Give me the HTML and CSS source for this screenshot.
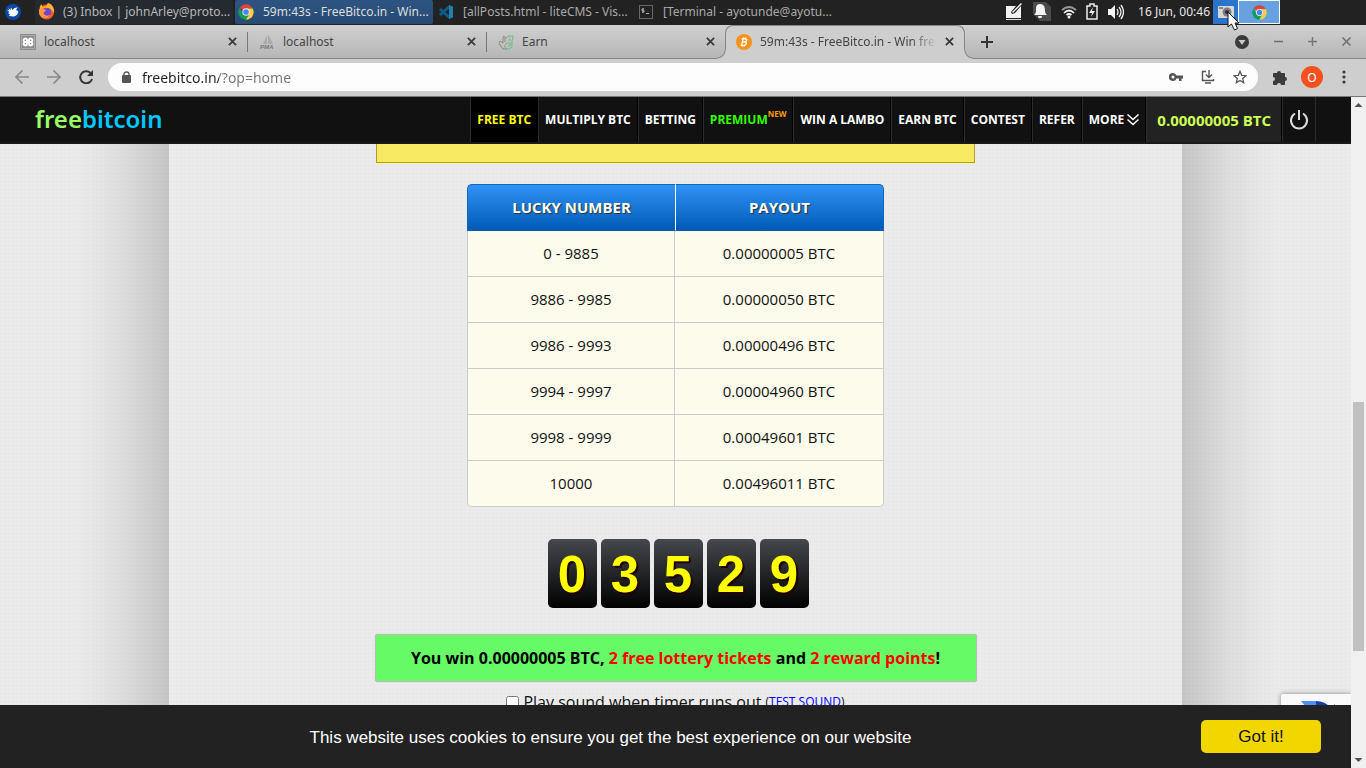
FILE: index.html
```html
<!DOCTYPE html>
<html lang="en">
<head>
<meta charset="utf-8">
<title>59m:43s - FreeBitco.in - Win free bitcoins every hour!</title>
<link rel="stylesheet" href="styles.css">
</head>
<body>
<svg class="defs" aria-hidden="true">
  <symbol id="chrome" viewBox="0 0 48 48">
    <path fill="#db4437" d="M24 24 4.900 11.200A23 23 0 0 1 44 12.500H24z"/>
    <path fill="#ffcd40" d="M24 13.500H44.500A23 23 0 0 1 23 47L34 29z"/>
    <path fill="#0f9d58" d="M4.900 11.200 14.500 28.500 24 35 31 33 23 47A23 23 0 0 1 4.900 11.200z"/>
    <circle cx="24" cy="24" r="11" fill="#f1f1f1"/>
    <circle cx="24" cy="24" r="8.500" fill="#4285f4"/>
  </symbol>
  <symbol id="close" viewBox="0 0 10 10"><path d="M1 1 9 9M9 1 1 9" fill="none" stroke="currentColor" stroke-width="2"/></symbol>
</svg>

<header class="panel">
  <button class="whisker" aria-label="Applications">
    <svg width="16" height="16" viewBox="0 0 16 16"><circle cx="8" cy="8" r="8" fill="#0a49a8"/><path fill="#fff" d="M3 3.500 5.500 6 6 3.500 7.500 6Q9 3 12.500 3.500L11 6q3 1 2 3-1 3-4 3.500L4 12 5 10.500 3 9l1.500-1L2 6l2.500.3z"/></svg>
  </button>
  <nav class="tasks" aria-label="Windows">
    <button class="task task-min">
      <svg width="17" height="17" viewBox="0 0 17 17"><circle cx="8.500" cy="9" r="7.500" fill="#ff5a2c"/><path d="M2 7C1 4 3 2 3 1l2 3 3-1 2-3c4 1 7 5 6 10C13 5 9 4 6 5z" fill="#ffb22c"/><circle cx="9" cy="9" r="4" fill="#6f45d0"/><path d="M1 7c1-2 3-2 4-1l3 1c-1 2-3 2-2 4s4 2 6 1c-2 5-12 4-11-5z" fill="#ff9640"/></svg>
      <span>(3) Inbox | johnArley@proto...</span>
    </button>
    <button class="task task-on">
      <svg width="16" height="16"><use href="#chrome"/></svg>
      <span>59m:43s - FreeBitco.in - Win...</span>
    </button>
    <button class="task">
      <svg width="16" height="16" viewBox="0 0 16 16"><path d="m12 2-10 9M12 14 2 5" stroke="#0d5c88" stroke-width="3"/><path d="m11 1 4 1.500v11L11 15z" fill="#1f7fae"/></svg>
      <span>[allPosts.html - liteCMS - Vis...</span>
    </button>
    <button class="task">
      <svg width="16" height="16" viewBox="0 0 16 16" fill="none"><rect x="1.500" y="1.500" width="13" height="13" fill="#222" stroke="#686868"/><path d="M6 5H4v1.500h2V8H4M5 4v5M8 9.500h3" stroke="#aaa"/></svg>
      <span>[Terminal - ayotunde@ayotu...</span>
    </button>
  </nav>
  <div class="tray">
    <svg width="18" height="18" viewBox="0 0 18 18"><path fill="#f2f2f2" d="M1 3h10L6 9l1 2 3-1 6-7v12H1z"/><path d="m7.500 9.500 9-9" stroke="#f2f2f2" stroke-width="1.500"/><path d="M1 16.500h15" stroke="#ddd"/></svg>
    <svg width="20" height="20" viewBox="0 0 20 20"><path fill="#4b4b4b" d="M1 0h13l5 5v14H8L1 12z"/><path fill="#f5f5f5" d="M8 2c4 0 5 3 5 7 0 2 1 3 2 4H2c1-1 2-2 2-4 0-4 0-7 4-7zM6 14h4c0 3-4 3-4 0z"/></svg>
    <svg width="16" height="16" viewBox="0 0 16 16" fill="none" stroke-width="1.700"><path stroke="#999" d="M1 6q7-6 14 0"/><path stroke="#f5f5f5" d="M3 9q5-5 10 0M5.500 11q2.500-2 5 0"/><circle cx="8" cy="13" r="1.500" fill="#f5f5f5"/></svg>
    <svg width="12" height="17" viewBox="0 0 12 17"><path fill="none" stroke="#eee" stroke-width="1.500" d="M4 3V1h4v2h3v13H1V3z"/><path fill="#eee" d="M7 4 3 10h3l-1 4 4-6H6z"/></svg>
    <svg width="17" height="16" viewBox="0 0 17 16"><path fill="#f5f5f5" d="M1 5h3l4-4v14l-4-4H1z"/><path fill="none" stroke="#eee" stroke-width="1.300" d="M10 5q2 3 0 6M12 3q4 5 0 10M14 1q5 7 0 14"/></svg>
  </div>
  <time class="clock">16 Jun, 00:46</time>
  <div class="launchers">
    <button class="shot" aria-label="Screenshot">
      <svg width="16" height="14" viewBox="0 0 16 14"><rect y="1" width="16" height="12" rx="1" fill="#d6d6d2"/><rect x="1" y="2" width="4" height="2" fill="#888"/><circle cx="9" cy="7" r="4.500" fill="#7e7e80"/><circle cx="9" cy="7" r="2" fill="#382344"/></svg>
      <svg class="pointer" width="13" height="21" viewBox="0 0 13 21"><path d="M1 1v15l3.500-3 3 6 3-1.500L8 12h4z" fill="#fff" stroke="#111"/></svg>
    </button>
    <button class="mini" aria-label="Chrome"><svg width="15" height="15"><use href="#chrome"/></svg></button>
  </div>
</header>

<div class="tabstrip">
  <div class="tab tab-first">
    <svg width="16" height="16" viewBox="0 0 16 16"><rect width="16" height="16" rx="1" fill="#8c8c8c"/><rect x="1.500" y="1.500" width="13" height="13" fill="none" stroke="#aaa"/><path d="M7 8H5.500a1.700 1.700 0 1 1 1.500-2v4a1.700 1.700 0 1 1-1.500-2h5a1.700 1.700 0 1 1-1.500 2V6a1.700 1.700 0 1 1 1.500 2z" fill="none" stroke="#fff" stroke-width="2"/></svg>
    <span>localhost</span><button aria-label="Close tab"><svg width="9" height="9"><use href="#close"/></svg></button>
  </div>
  <div class="tab">
    <svg width="16" height="16" viewBox="0 0 16 16"><path d="m8 1-4 9h4zM9 0l5 10H9z" fill="#aaa"/><text x="1" y="15" class="pma">PMA</text></svg>
    <span>localhost</span><button aria-label="Close tab"><svg width="9" height="9"><use href="#close"/></svg></button>
  </div>
  <div class="tab">
    <svg width="16" height="16" viewBox="0 0 16 16" fill="none"><path stroke="#94877f" d="M7 8V3Q5 1 5 4v5L2 7q-2 1 0 4l3 4h4"/><path stroke="#68bd86" d="M8 5q0-3 3-3h4v3l-1 1v7l-3 2H8q-3-3 1-6h4q0 3-3 3M10 6h3M11 4h1"/></svg>
    <span>Earn</span><button aria-label="Close tab"><svg width="9" height="9"><use href="#close"/></svg></button>
  </div>
  <div class="tab tab-active">
    <svg width="16" height="16" viewBox="0 0 16 16"><circle cx="8" cy="8" r="8" fill="#f7931a"/><path d="M5.500 4.800H9q2.300.3 1.700 1.700T8.500 7.900H6 8.500q2.300.3 1.700 1.900T7.500 11.300H4.500M7 4.500 5.700 11.500M7.700 3.300 7.500 4.500M9.500 3.500 9.300 4.700M6.300 11.500 6 12.700M8.200 11.500 8 12.700" fill="none" stroke="#fff" stroke-width="1.300"/></svg>
    <span>59m:43s - FreeBitco.in - Win fre</span><button aria-label="Close tab"><svg width="9" height="9"><use href="#close"/></svg></button>
  </div>
  <button class="newtab" aria-label="New tab"><svg width="12" height="12" viewBox="0 0 12 12"><path d="M6 0v12M0 6h12" stroke="#333" stroke-width="2"/></svg></button>
  <div class="winbtns">
    <button aria-label="Search tabs"><svg width="14" height="14" viewBox="0 0 14 14"><circle cx="7" cy="7" r="7" fill="#3b3b3b"/><path d="M3.500 5h7L7 10z" fill="#ccc"/></svg></button>
    <button aria-label="Minimize"><svg width="9" height="9" viewBox="0 0 9 9"><path d="M0 4.500h9" stroke="#6e6e6e" stroke-width="1.500"/></svg></button>
    <button aria-label="Maximize"><svg width="9" height="9" viewBox="0 0 9 9"><path d="M0 4.500h9M4.500 0v9" stroke="#777" stroke-width="1.500"/></svg></button>
    <button aria-label="Close window"><svg width="9" height="9" viewBox="0 0 9 9"><path d="m.5.5 8 8m0-8-8 8" stroke="#6e6e6e" stroke-width="1.500"/></svg></button>
  </div>
</div>

<div class="toolbar">
  <div class="history">
    <button aria-label="Back"><svg width="14" height="14" viewBox="0 0 14 14" fill="none" stroke="#8a8a8a" stroke-width="1.700"><path d="M14 7H1M7.500.5 1 7l6.500 6.500"/></svg></button>
    <button aria-label="Forward"><svg width="14" height="14" viewBox="0 0 14 14" fill="none" stroke="#8a8a8a" stroke-width="1.700"><path d="M0 7h13M6.500.5 13 7l-6.500 6.500"/></svg></button>
    <button aria-label="Reload"><svg width="14" height="14" viewBox="0 0 14 14"><path d="M11.500 3A6 6 0 1 0 13 9" fill="none" stroke="#333" stroke-width="2"/><path d="M14 0v6H8z" fill="#333"/></svg></button>
  </div>
  <div class="omnibox">
    <svg width="9" height="12" viewBox="0 0 9 12"><rect y="4" width="9" height="8" rx="1" fill="#555"/><path d="M2 5V3a2.500 2 0 0 1 5 0v2" fill="none" stroke="#555" stroke-width="1.300"/></svg>
    <input type="text" value="freebitco.in/?op=home" aria-label="Address">
    <svg width="14" height="10" viewBox="0 0 14 10"><path fill="#555" fill-rule="evenodd" d="M4 1a4 4 0 1 0 3.500 5.500H10V9h2.500V6.500H14v-3H7.500A4 4 0 0 0 4 1zm0 2.500a1.500 1.500 0 1 1 0 3 1.500 1.500 0 0 1 0-3z"/></svg>
    <svg width="14" height="14" viewBox="0 0 14 14" fill="none" stroke="#555" stroke-width="1.400"><path d="M5 1.500H1.500v9h11V9M8 0v7M5 4.500l3 3 3-3M4 13h6"/></svg>
    <svg width="14" height="14" viewBox="0 0 14 14"><path d="m7 1.300 1.700 4 4.300.4-3.300 2.900 1 4.200L7 10.500l-3.700 2.300 1-4.200L1 5.700l4.300-.4z" fill="none" stroke="#555" stroke-width="1.300"/></svg>
  </div>
  <button class="ext" aria-label="Extensions"><svg width="15" height="15" viewBox="0 0 15 15"><path fill="#3b3b3b" d="M5 3a2 2 0 0 1 4 0h3q1 0 1 1v3a2 2 0 0 1 0 4v3q0 1-1 1H9a2 2 0 0 0-4 0H2q-1 0-1-1v-3a2 2 0 0 0 0-4V4q0-1 1-1z"/></svg></button>
  <button class="avatar">O</button>
  <button class="menu" aria-label="Menu"><svg width="4" height="14" viewBox="0 0 4 14" fill="#3b3b3b"><circle cx="2" cy="2" r="1.600"/><circle cx="2" cy="7" r="1.600"/><circle cx="2" cy="12" r="1.600"/></svg></button>
</div>

<div class="viewport">
  <div class="page">
    <header class="topbar">
      <a class="logo" href="#"><span>free</span>bitcoin</a>
      <nav class="nav" aria-label="Main">
        <a class="current" href="#">FREE BTC</a>
        <a href="#">MULTIPLY BTC</a>
        <a href="#">BETTING</a>
        <a class="premium" href="#">PREMIUM<sup>NEW</sup></a>
        <a href="#">WIN A LAMBO</a>
        <a href="#">EARN BTC</a>
        <a href="#">CONTEST</a>
        <a href="#">REFER</a>
        <a href="#">MORE <svg width="12" height="12" viewBox="0 0 12 12" fill="none" stroke="#fff" stroke-width="1.500"><path d="m.5.500 5.500 5 5.500-5M.5 5.500l5.500 5 5.500-5"/></svg></a>
        <a class="balance" href="#">0.00000005 BTC</a>
        <a class="power" href="#" aria-label="Log out"><svg width="20" height="20" viewBox="0 0 20 20" fill="none" stroke="#ddd" stroke-width="2"><path d="M6 3.500a8 8 0 1 0 8 0M10 0v10"/></svg></a>
      </nav>
    </header>

    <div class="backdrop">
      <main class="content">
        <div class="notice"></div>
        <table class="payouts">
          <colgroup><col class="range"><col></colgroup>
          <thead><tr><th scope="col">LUCKY NUMBER</th><th scope="col">PAYOUT</th></tr></thead>
          <tbody>
            <tr><td>0 - 9885</td><td>0.00000005 BTC</td></tr>
            <tr><td>9886 - 9985</td><td>0.00000050 BTC</td></tr>
            <tr><td>9986 - 9993</td><td>0.00000496 BTC</td></tr>
            <tr><td>9994 - 9997</td><td>0.00004960 BTC</td></tr>
            <tr><td>9998 - 9999</td><td>0.00049601 BTC</td></tr>
            <tr><td>10000</td><td>0.00496011 BTC</td></tr>
          </tbody>
        </table>
        <div class="digits"><span>0</span><span>3</span><span>5</span><span>2</span><span>9</span></div>
        <p class="result">You win 0.00000005 BTC, <em>2 free lottery tickets</em> and <em>2 reward points</em>!</p>
        <div class="sound">
          <input type="checkbox" id="sound"><label for="sound">Play sound when timer runs out</label>
          <small>(<a href="#">TEST SOUND</a>)</small>
        </div>
      </main>
    </div>

    <div class="captcha"><svg width="36" height="36" viewBox="0 0 36 36"><path d="M0 1q8 0 15 0v9l-5 3z" fill="#4a90f5"/><path d="M15 1q9 0 15 7l4-4v15H19l5-5q-4-5-9-5z" fill="#1c3aa9"/></svg></div>
    <div class="cookies">
      <p>This website uses cookies to ensure you get the best experience on our website</p>
      <button>Got it!</button>
    </div>
  </div>
  <div class="scrollbar" aria-hidden="true">
    <svg width="15" height="16" viewBox="0 0 15 16"><path d="m3.500 10 4-4 4 4z" fill="#505050"/></svg>
    <div class="track"><div class="thumb"></div></div>
    <svg width="15" height="16" viewBox="0 0 15 16"><path d="m3.500 6 4 4 4-4z" fill="#505050"/></svg>
  </div>
</div>
</body>
</html>
```
FILE: styles.css
```css
* { box-sizing: border-box; }
body {
  margin: 0;
  height: 100vh;
  display: flex;
  flex-direction: column;
  overflow: hidden;
  font-family: "Noto Sans", sans-serif;
}
button { margin: 0; padding: 0; border: 0; background: none; font: inherit; color: inherit; display: flex; align-items: center; }
svg { flex: none; display: block; }
a { text-decoration: none; }
.defs { position: absolute; width: 0; height: 0; }

/* desktop panel */
.panel { display: flex; align-items: stretch; height: 25px; flex: none; background: #222; color: #ddd; font-size: 12px; padding: 0 86px 1px 0; }
.whisker { padding: 0 5px; margin-right: 9px; }
.tasks { display: flex; flex: 1; gap: 2px; }
.task { width: 198px; gap: 9px; padding: 0 3px 1px; color: #aaa; border-radius: 2px; white-space: nowrap; }
.task-min { background: #252a30; color: #b8b8b8; gap: 8px; }
.task-on { background: linear-gradient(#2d5481, #284b74); color: #ddd; }
.tray { display: flex; align-items: center; gap: 9px; margin-right: 14px; padding-bottom: 1px; }
.clock { align-self: center; color: #e8e8e8; margin-right: 3px; padding-bottom: 1px; }
.launchers { display: flex; }
.shot { position: relative; width: 25px; justify-content: center; background: #2a75cb; }
.pointer { position: absolute; left: 14px; top: 11px; z-index: 5; }
.mini { width: 42px; justify-content: center; background: #68a1e0; border: 1px solid #fff; }

/* browser frame */
.tabstrip { display: flex; flex: none; height: 34px; background: linear-gradient(#d0d0d0, #b6b6b6); border-bottom: 1px solid #858585; color: #444; font-size: 12px; }
.tab { position: relative; display: flex; align-items: center; width: 239px; padding: 0 11px; gap: 8px; white-space: nowrap; }
.tab::after { content: ""; position: absolute; right: 0; top: 7px; height: 20px; border-right: 1px solid #777; }
.tab-first { width: 248px; padding-left: 20px; }
.tab:nth-child(3)::after, .tab-active::after { display: none; }
.tab span { flex: 1; overflow: hidden; }
.tab button { color: #3b3b3b; }
.tab-active { height: 34px; width: 240px; margin-left: -1px; background: #cecece; border: 1px solid #858585; border-bottom: 0; border-radius: 8px 8px 0 0; padding: 0 10px 2px; }
.tab-active span { mask-image: linear-gradient(90deg, #000 85%, transparent); }
.tab-active::before, .newtab::before { content: ""; position: absolute; left: -9px; bottom: 0; width: 9px; height: 9px; background: radial-gradient(circle at 0 0, transparent 7px, #858585 8px, #cecece 9px); }
.newtab { position: relative; height: 34px; padding: 0 16px; }
.newtab::before { left: -1px; background: radial-gradient(circle at 100% 0, transparent 7px, #858585 8px, #cecece 9px); }
.winbtns { display: flex; align-items: center; gap: 25px; margin-left: auto; padding-right: 15px; }
.pma { font: italic bold 6px "Liberation Sans", sans-serif; fill: #777; }

.toolbar { display: flex; align-items: center; flex: none; height: 38px; background: #cecece; border-bottom: 1px solid #777; padding: 0 20px 1px 15px; }
.history { display: flex; gap: 18px; margin-right: 15px; }
.omnibox { display: flex; align-items: center; flex: 1; gap: 18px; height: 28px; border-radius: 14px; background: #fdfdfd; padding: 0 11px 0 14px; }
.omnibox input {
  flex: 1; min-width: 0; border: 0; padding: 0; margin-left: -7px; outline: 0;
  font: 14px "Noto Sans", sans-serif; color: transparent;
  background: linear-gradient(90deg, #222 77px, #757575 77px); background-clip: text; -webkit-background-clip: text;
}
.ext { margin-left: 14px; }
.avatar { width: 22px; height: 22px; border-radius: 50%; background: #f4511e; color: #fff; font-size: 12px; justify-content: center; margin: 0 19px 0 14px; }

.viewport { display: flex; flex: 1; min-height: 0; }
.page { position: relative; display: flex; flex-direction: column; flex: 1; min-width: 0; overflow: hidden; font-family: "Open Sans", sans-serif; }
.scrollbar { display: flex; flex-direction: column; width: 15px; background: #f0f0f0; }
.track { flex: 1; padding: 0 2px; }
.thumb { height: 39%; margin-top: calc(100% + 278px); background: #c1c1c1; }

/* site header */
.topbar { display: flex; justify-content: space-between; flex: none; height: 47px; padding: 0 35px; background: #111; border-bottom: 2px solid #191919; }
.logo { align-self: center; color: #00c8ff; font: 600 24px/32px "Noto Sans", sans-serif; padding-bottom: 2px; }
.logo span { color: #9f6; }
.nav { display: flex; border-left: 1px solid #2b2b2b; }
.nav a { display: flex; align-items: center; gap: 3px; padding: 0 6px; border-left: 1px solid #2b2b2b; border-right: 1px solid #000; color: #fff; font-size: 12px; font-weight: 700; white-space: nowrap; }
.nav a:first-child { border-left: 0; }
.nav .current { background: #000; color: #ff0; }
.nav .premium { color: #3f0; gap: 0; }
.premium sup { color: #f90; font-size: 8px; line-height: 8px; align-self: center; margin-bottom: 12px; }
.nav .balance { background: #222; color: #cf5; font-size: 15px; padding: 0 10px; }
.nav a.power { border-right: 1px solid #2b2b2b; }

/* page body */
.backdrop {
  display: flex; flex: 1; justify-content: center;
  background:
    repeating-linear-gradient(90deg, transparent 0 3px, rgba(255,255,255,.1) 3px 4px),
    repeating-linear-gradient(transparent 0 3px, rgba(255,255,255,.1) 3px 4px), #e9e9e9;
}
.backdrop::before, .backdrop::after { content: ""; flex: 1; background: linear-gradient(90deg, transparent 45%, rgba(0,0,0,.05) 70%, rgba(0,0,0,.16)); }
.backdrop::after { background: linear-gradient(270deg, transparent 45%, rgba(0,0,0,.05) 70%, rgba(0,0,0,.16)); }
.content { display: flex; flex-direction: column; align-items: center; width: 75%; font-size: 15px; color: #111; }
.notice { width: 599px; height: 19px; background: #f7e961; border: 1px solid #aaa032; border-top: 0; box-shadow: 0 1px #fff38b; margin-bottom: 21px; flex: none; }
.payouts { width: 417px; border-collapse: separate; border-spacing: 0; text-align: center; table-layout: fixed; }
.payouts .range { width: 208px; }
.payouts th { height: 47px; padding: 0 0 2px; color: #fff; background: linear-gradient(#3093f6, #005ab5); border: 1px solid #0e67b8; border-bottom-color: #005ab5; text-shadow: 1px 1px 1px #333; }
.payouts th:first-child { border-right: 0; border-radius: 5px 0 0; }
.payouts th:last-child { border-left: 1px solid #fff; border-radius: 0 5px 0 0; }
.payouts td { height: 46px; padding: 0 0 2px; background: #fdfbec; border: 1px solid #ccc; border-top: 0; }
.payouts td:last-child { border-left: 0; }
.payouts tr:last-child td:first-child { border-bottom-left-radius: 5px; }
.payouts tr:last-child td:last-child { border-bottom-right-radius: 5px; }
.digits { display: flex; gap: 4px; margin: 32px 0 26px; padding-left: 5px; }
.digits span { width: 49px; height: 69px; border-radius: 5px; background: linear-gradient(#45484d, #000); color: #ff0; font: bold 51px/72px "Liberation Sans", sans-serif; text-align: center; text-shadow: 2px 2px #200; }
.result { width: 602px; margin: 0 0 8px; padding: 12px 0; background: #66fa66; border: 1px solid #bbb; border-radius: 3px; box-shadow: 0 0 1px #aaa; text-align: center; font-weight: 700; font-size: 16px; line-height: 22px; color: #000; }
.result em { color: #f00; font-style: normal; }
.sound { display: flex; align-items: center; gap: 4px; font-size: 16px; line-height: 24px; }
.sound input { width: 13px; height: 13px; margin: 0; }
.sound small { font-size: 12px; }
.sound a { color: #00f; }
.captcha { position: absolute; right: 0; bottom: 14px; width: 70px; height: 60px; padding: 6px 20px; background: #f9f9f9; border-radius: 2px 0 0 2px; box-shadow: 0 0 5px #888; }
.cookies { position: absolute; left: 0; right: 0; bottom: 0; display: flex; align-items: center; padding: 15px 30px; background: #222; color: #fff; font: 17px "Liberation Sans", sans-serif; }
.cookies p { flex: 1; margin: 0; padding: 2px 10px 0 0; text-align: center; }
.cookies button { justify-content: center; width: 120px; height: 33px; border-radius: 5px; background: #f1d600; color: #111; }
```
